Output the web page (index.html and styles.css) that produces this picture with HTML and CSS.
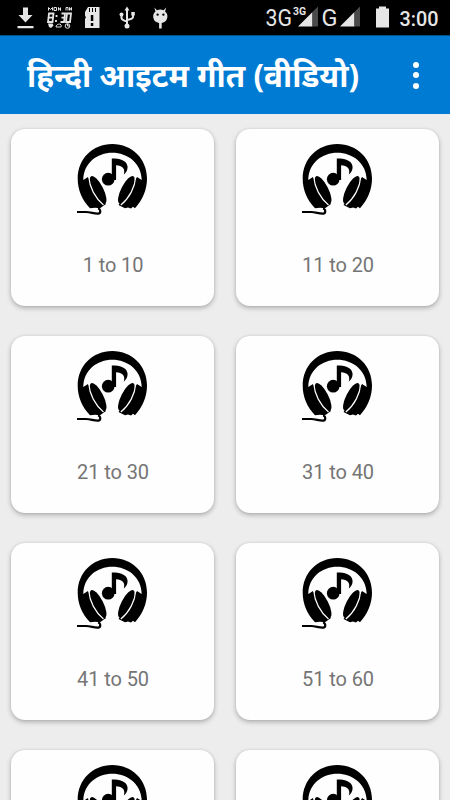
FILE: index.html
```html
<!DOCTYPE html>
<html lang="hi">
<head>
<meta charset="utf-8">
<title>हिन्दी आइटम गीत (वीडियो)</title>
<link rel="stylesheet" href="styles.css">
</head>
<body>
<svg class="defs" aria-hidden="true">
  <symbol id="headphones" viewBox="0 0 72 72">
    <path d="M14 65.3C6 57 1.7 47 1.7 35.5C1.7 16 16.5 1 36.3 1S71 16 71 35.5C71 47 66.5 57 59 65.3L57 63.8L55 65.5L52 64.6L49 65.3L42.5 62L61 34L65.7 37C65.5 20 51.5 9.7 36.3 9.7S7.5 20 7.3 37L12 34L30 61L24 65.3L19 64.8Z"/>
    <ellipse cx="22.1" cy="46.8" rx="5.2" ry="15.3" transform="rotate(-27 22.1 46.8)"/>
    <ellipse cx="50.4" cy="46.8" rx="5.2" ry="15.3" transform="rotate(27 50.4 46.8)"/>
    <path class="seam" d="M12.8 34C13.5 44 19 55 27.5 62M59.700 34C59 44 53.5 55 44.8 62"/>
    <ellipse cx="32.2" cy="36.2" rx="6.300" ry="6.400"/>
    <path d="M35.800 15.400H39C46 16 51.4 18.5 51.6 24C51.6 27 50.200 30 47.8 31.5C49.7 25.5 46 22.5 40.100 22.300V37H35.800Z"/>
    <path class="cable" d="M1 69H10C15 69 18 71 22.5 70.6C25 70 24.8 66 22 65.500"/>
  </symbol>
</svg>

<div class="status">
  <svg class="status-icons" viewBox="0 0 180 36">
    <path d="M23 7.5h5V15h4.500L25.500 22.500L18.500 15H23zM17.500 26h16v2.300h-16z"/>
    <g class="digits">
      <path d="M49 13.500h4.500l-1 8.500H48zM48.500 17.700h4.500M61.500 13.500H65L64 22H60.500M61.500 17.700H64.500M67 13.500h4L70 22h-4z"/>
      <path d="M56.500 15v2M56 20v2"/>
      <path class="thin" d="M48.500 10.500v-3l2 2 2-2v3M54 7.500h2.500v3H54zM58.500 10.500v-3l2 3v-3M66 10.500v-3h2v3M69.500 10.500v-3l1 2 1-2v3M56 27c0-3 4-3 4-3 2 1 1 3 1 3zM67.500 24v2h2"/>
      <circle class="thin" cx="67.500" cy="26" r="2.300"/>
    </g>
    <path d="M48 23.500h4.500l1 2-2.500 2.500-2-1z"/>
    <path fill-rule="evenodd" d="M88 7h11.500v21H85V19l1-2-1-1v-4zM90.800 15v6h2.500v-6zM90.800 23v3h2.500v-3zM89 8v4h1V8zm3 0v4h1V8zm3 0v4h1V8z"/>
    <path class="line" d="M127 8v17M121.500 15v3q0 2 5.500 3.500M133 14v3q0 2-6 3"/>
    <path d="M127 6.500l2.500 4h-5zM131.300 12h3.500v3.500h-3.500z"/><circle cx="121.500" cy="14.500" r="2"/><circle cx="127" cy="26" r="2.500"/>
    <path fill-rule="evenodd" d="M154.300 7.500L157 10.200Q160.300 8.800 163.600 10.200L166.300 7.500L165 11.500Q168 14 167.300 17.500Q166.500 22 161.700 23V28.500h-2.600V23Q154 22 153.300 17.500Q152.700 14 155.500 11.500zM156.400 14.600a1.200 1.200 0 1 0 2.400 0a1.200 1.200 0 1 0-2.400 0M162.200 14.600a1.200 1.200 0 1 0 2.400 0a1.200 1.200 0 1 0-2.400 0"/>
  </svg>
  <svg class="status-signal" viewBox="255 0 195 36">
    <text x="265.500" y="26" font-size="24" textLength="26.500" lengthAdjust="spacingAndGlyphs">3G</text>
    <text class="bold" x="293" y="15" font-size="11" textLength="13" lengthAdjust="spacingAndGlyphs">3G</text>
    <path d="M298 26.500L312.500 12V26.500z"/><path class="dim" d="M312.500 12L318 6.500v20h-5.500z"/>
    <text x="321.500" y="26" font-size="24" textLength="16" lengthAdjust="spacingAndGlyphs">G</text>
    <path d="M340 26.500L354.500 12V26.500z"/><path class="dim" d="M354.500 12L360 6.500v20h-5.500z"/>
    <path d="M379 6.500h7v2h3v19h-13v-19h3z"/>
    <text class="medium" x="399.500" y="25.500" font-size="20" textLength="39" lengthAdjust="spacingAndGlyphs">3:00</text>
  </svg>
</div>

<header class="bar">
  <h1>हिन्दी आइटम गीत (वीडियो)</h1>
  <div class="menu"><i></i><i></i><i></i></div>
</header>

<main class="grid">
  <section class="card"><svg class="art"><use href="#headphones"/></svg><p>1 to 10</p></section>
  <section class="card"><svg class="art"><use href="#headphones"/></svg><p>11 to 20</p></section>
  <section class="card"><svg class="art"><use href="#headphones"/></svg><p>21 to 30</p></section>
  <section class="card"><svg class="art"><use href="#headphones"/></svg><p>31 to 40</p></section>
  <section class="card"><svg class="art"><use href="#headphones"/></svg><p>41 to 50</p></section>
  <section class="card"><svg class="art"><use href="#headphones"/></svg><p>51 to 60</p></section>
  <section class="card"><svg class="art"><use href="#headphones"/></svg></section>
  <section class="card"><svg class="art"><use href="#headphones"/></svg></section>
</main>
</body>
</html>
```
FILE: styles.css
```css
* { box-sizing: border-box; }
html, body { margin: 0; height: 800px; overflow: hidden; }
body {
  display: flex;
  flex-direction: column;
  background: #ededed;
  font-family: Roboto, "Noto Sans", sans-serif;
}
.defs { display: none; }
.status {
  display: flex;
  justify-content: space-between;
  flex: none;
  height: 36px;
  background: #000;
  border-bottom: 1px solid #00518a;
}
.status svg { height: 36px; fill: #e6e6e6; }
.status-icons { width: 180px; }
.status-signal { width: 195px; }
.status-signal .dim { fill: #4a4a4a; }
.bold { font-weight: 700; }
.medium { font-weight: 500; }
.digits { fill: none; stroke: #e6e6e6; stroke-width: 1.8; }
.digits .thin { stroke-width: 1; }
.line { fill: none; stroke: #e6e6e6; stroke-width: 2; }
.bar {
  display: flex;
  align-items: center;
  justify-content: space-between;
  flex: none;
  height: 78px;
  padding: 0 31px 0 27px;
  background: #007bd3;
  color: #fff;
}
.bar h1 {
  margin: 0;
  font: 700 31.4px/40px "Noto Sans", "Noto Sans Devanagari", sans-serif;
  white-space: nowrap;
}
.menu { display: flex; flex-direction: column; gap: 4.5px; width: 6px; }
.menu i { width: 6px; height: 6px; border-radius: 50%; background: #fff; }
.grid {
  display: grid;
  flex: 1;
  min-height: 0;
  overflow: hidden;
  grid-template-columns: 203px 203px;
  grid-auto-rows: 177px;
  gap: 30px 22px;
  padding: 15px 11px 0;
}
.card {
  display: flex;
  flex-direction: column;
  align-items: center;
  padding-top: 14px;
  border-radius: 14px;
  background: #fefefe;
  box-shadow: 0 2px 5px rgba(0, 0, 0, .27), 0 0 2px rgba(0, 0, 0, .1);
}
.art { display: block; width: 72px; height: 72px; margin-right: 1px; }
.card p { margin: 38px 0 0 1px; font-size: 20px; line-height: 24px; color: #757575; letter-spacing: -.1px; }
.seam { fill: none; stroke: #fefefe; stroke-width: 1.2; }
.cable { fill: none; stroke: #000; stroke-width: 2.2; }
```
